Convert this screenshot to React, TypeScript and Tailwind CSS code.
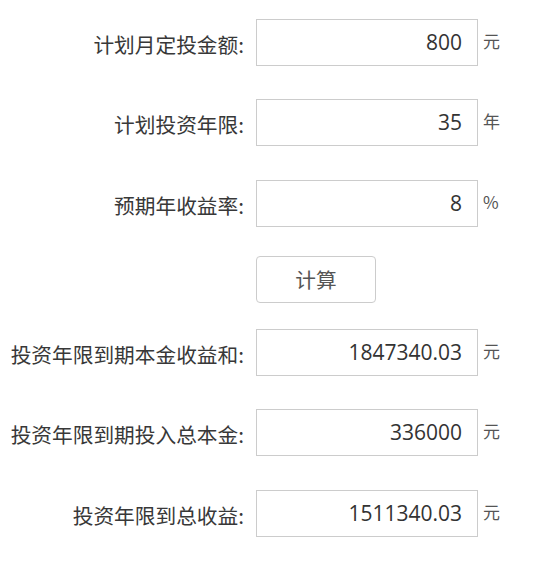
const font = { fontFamily: '"Noto Sans CJK SC", "Open Sans", sans-serif' };

interface FieldRowProps {
  label: string;
  value: string;
  unit: string;
  className?: string;
}

function FieldRow({ label, value, unit, className = '' }: FieldRowProps) {
  return (
    <div className={`flex items-start ${className}`}>
      <label className="w-[244px] h-[47px] flex items-center justify-end pt-[5px] text-[20.7px] text-[#383838]">
        {label}
      </label>
      <div className="ml-[12px] w-[222px] h-[47px] border border-[#ccc] bg-white flex items-center justify-end pr-[15px] text-[21px] text-[#333] font-['Open_Sans']">
        {value}
      </div>
      <span className="ml-[5px] mt-[9px] text-[17px] text-[#555]">{unit}</span>
    </div>
  );
}

export default function App() {
  return (
    <div className="w-[543px] h-[561px] bg-white pt-[19px]" style={font}>
      <FieldRow label="计划月定投金额:" value="800" unit="元" />
      <FieldRow label="计划投资年限:" value="35" unit="年" className="mt-[33px]" />
      <FieldRow label="预期年收益率:" value="8" unit="%" className="mt-[34px]" />
      <div className="mt-[29px] pl-[256px]">
        <button className="w-[120px] h-[47px] border border-[#ccc] rounded-[4px] bg-white text-[20.7px] text-[#555]">
          计算
        </button>
      </div>
      <FieldRow label="投资年限到期本金收益和:" value="1847340.03" unit="元" className="mt-[26px]" />
      <FieldRow label="投资年限到期投入总本金:" value="336000" unit="元" className="mt-[33px]" />
      <FieldRow label="投资年限到总收益:" value="1511340.03" unit="元" className="mt-[34px]" />
    </div>
  );
}
